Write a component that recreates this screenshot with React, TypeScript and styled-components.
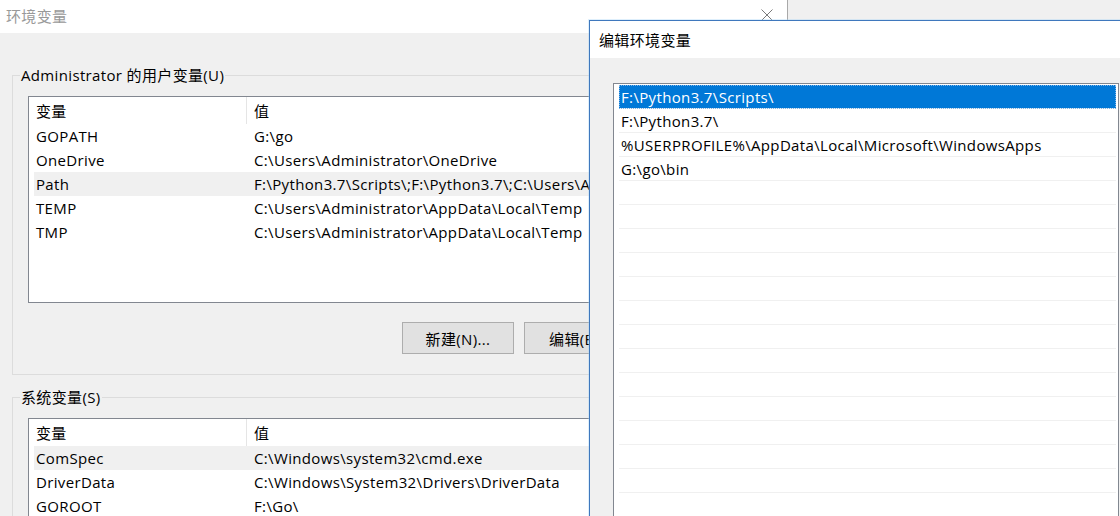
import React from "react";
import styled, { createGlobalStyle } from "styled-components";

const GlobalStyle = createGlobalStyle`
  html, body {
    margin: 0;
    padding: 0;
  }
  body {
    font-family: "Open Sans", "Noto Sans CJK SC", sans-serif;
    font-size: 15px;
    letter-spacing: 0.35px;
    color: #000;
    background: #f0f0f0;
  }
  * { box-sizing: border-box; }
`;

const Desktop = styled.div`
  position: relative;
  width: 1120px;
  height: 516px;
  overflow: hidden;
  background: #f0f0f0;
`;

const BackWindow = styled.section`
  position: absolute;
  left: 0;
  top: 0;
  width: 788px;
  height: 620px;
  background: #f0f0f0;
  border-right: 1px solid #a9a9a9;
  display: flex;
  flex-direction: column;
`;

const EditWindow = styled.section`
  position: absolute;
  left: 589px;
  top: 20px;
  width: 560px;
  height: 560px;
  background: #f0f0f0;
  border: 1px solid #3f78bd;
  box-shadow: 0 0 0 1px rgba(160, 210, 245, 0.35);
  display: flex;
  flex-direction: column;
`;

const TitleBar = styled.header<{ $height: number; $inactive?: boolean }>`
  height: ${(p) => p.$height}px;
  flex: none;
  background: #fff;
  display: flex;
  align-items: center;
  justify-content: space-between;
  padding: 0 14px 0 ${(p) => (p.$inactive ? 6 : 9)}px;
  color: ${(p) => (p.$inactive ? "#999" : "#000")};
  line-height: 20px;
`;

const TitleText = styled.span<{ $lift?: number }>`
  position: relative;
  top: ${(p) => -(p.$lift ?? 0)}px;
`;

const CloseGlyph = styled.svg`
  width: 12px;
  height: 12px;
  margin-top: -4px;
  flex: none;
`;

const BackBody = styled.div`
  padding: 32px 12px 0;
  display: flex;
  flex-direction: column;
  gap: 12px;
`;

const Group = styled.fieldset`
  margin: 0;
  padding: 0;
  border: 1px solid #dcdcdc;
  min-width: 0;
`;

const Legend = styled.legend`
  margin-left: 7px;
  padding: 0 1px;
  line-height: 20px;
  height: 20px;
`;

const GroupContent = styled.div`
  padding: 11px 16px 20px 15px;
  display: flex;
  flex-direction: column;
`;

const ListView = styled.div<{ $height: number }>`
  height: ${(p) => p.$height}px;
  background: #fff;
  border: 1px solid #828790;
  overflow: hidden;
`;

const HeaderRow = styled.div`
  display: grid;
  grid-template-columns: 218px 1fr;
  height: 27px;
`;

const HeaderCell = styled.div<{ $divider?: boolean }>`
  display: flex;
  align-items: center;
  padding-left: 7px;
  border-right: ${(p) => (p.$divider ? "1px solid #e5e5e5" : "none")};
  white-space: nowrap;
`;

const DataRow = styled.div<{ $selected?: boolean }>`
  display: grid;
  grid-template-columns: 213px 1fr;
  height: 24px;
  margin-left: 5px;
  align-items: center;
  background: ${(p) => (p.$selected ? "#f0f0f0" : "transparent")};
  white-space: nowrap;
`;

const NameCell = styled.span`
  padding-left: 2px;
  overflow: hidden;
`;

const ValueCell = styled.span`
  padding-left: 7px;
  overflow: hidden;
`;

const ButtonRow = styled.div`
  display: flex;
  justify-content: flex-end;
  gap: 10px;
  margin-top: 19px;
`;

const Button = styled.button`
  width: 112px;
  height: 32px;
  margin: 0;
  padding: 0;
  border: 1px solid #adadad;
  background: #e1e1e1;
  font: inherit;
  letter-spacing: inherit;
  color: #000;
  white-space: nowrap;
`;

const EditBody = styled.div`
  padding: 25px 0 0 23px;
`;

const PathList = styled.div`
  width: 506px;
  height: 460px;
  background: #fff;
  border: 1px solid #828790;
  padding: 1px 2px 0 5px;
  overflow: hidden;
`;

const PathRow = styled.div<{ $selected?: boolean }>`
  height: 24px;
  border-bottom: 1px solid #f0f0f0;
  display: flex;
  align-items: center;
  padding-left: 2px;
  white-space: nowrap;
  background: ${(p) => (p.$selected ? "#0078d7" : "transparent")};
  color: ${(p) => (p.$selected ? "#fff" : "#000")};
  outline: ${(p) => (p.$selected ? "1px dotted #7fb4e6" : "none")};
  outline-offset: -1px;
`;

type Var = { name: string; value: string; selected?: boolean };

const userVars: Var[] = [
  { name: "GOPATH", value: "G:\\go" },
  { name: "OneDrive", value: "C:\\Users\\Administrator\\OneDrive" },
  {
    name: "Path",
    value: "F:\\Python3.7\\Scripts\\;F:\\Python3.7\\;C:\\Users\\Administrator\\AppData\\Local\\Microsoft\\WindowsApps;G:\\go\\bin",
    selected: true,
  },
  { name: "TEMP", value: "C:\\Users\\Administrator\\AppData\\Local\\Temp" },
  { name: "TMP", value: "C:\\Users\\Administrator\\AppData\\Local\\Temp" },
];

const systemVars: Var[] = [
  { name: "ComSpec", value: "C:\\Windows\\system32\\cmd.exe", selected: true },
  { name: "DriverData", value: "C:\\Windows\\System32\\Drivers\\DriverData" },
  { name: "GOROOT", value: "F:\\Go\\" },
  { name: "NUMBER_OF_PROCESSORS", value: "4" },
];

const paths = [
  "F:\\Python3.7\\Scripts\\",
  "F:\\Python3.7\\",
  "%USERPROFILE%\\AppData\\Local\\Microsoft\\WindowsApps",
  "G:\\go\\bin",
];

function VarList({ vars, height }: { vars: Var[]; height: number }) {
  return (
    <ListView $height={height}>
      <HeaderRow>
        <HeaderCell $divider>变量</HeaderCell>
        <HeaderCell>值</HeaderCell>
      </HeaderRow>
      {vars.map((v) => (
        <DataRow key={v.name} $selected={v.selected}>
          <NameCell>{v.name}</NameCell>
          <ValueCell>{v.value}</ValueCell>
        </DataRow>
      ))}
    </ListView>
  );
}

export default function App() {
  const emptyRows = Array.from({ length: 16 }, (_, i) => i);
  return (
    <>
      <GlobalStyle />
      <Desktop>
        <BackWindow>
          <TitleBar $height={33} $inactive>
            <TitleText $lift={1}>环境变量</TitleText>
            <CloseGlyph viewBox="0 0 12 12">
              <path d="M0.5 0.5 L11.5 11.5 M11.5 0.5 L0.5 11.5" stroke="#7a7a7a" strokeWidth="1" fill="none" />
            </CloseGlyph>
          </TitleBar>
          <BackBody>
            <Group>
              <Legend>Administrator 的用户变量(U)</Legend>
              <GroupContent>
                <VarList vars={userVars} height={207} />
                <ButtonRow>
                  <Button>新建(N)...</Button>
                  <Button>编辑(E)...</Button>
                  <Button>删除(D)</Button>
                </ButtonRow>
              </GroupContent>
            </Group>
            <Group>
              <Legend>系统变量(S)</Legend>
              <GroupContent>
                <VarList vars={systemVars} height={207} />
              </GroupContent>
            </Group>
          </BackBody>
        </BackWindow>
        <EditWindow>
          <TitleBar $height={37}>
            <TitleText>编辑环境变量</TitleText>
          </TitleBar>
          <EditBody>
            <PathList>
              {paths.map((p, i) => (
                <PathRow key={p} $selected={i === 0}>
                  {p}
                </PathRow>
              ))}
              {emptyRows.map((i) => (
                <PathRow key={`empty-${i}`} />
              ))}
            </PathList>
          </EditBody>
        </EditWindow>
      </Desktop>
    </>
  );
}
